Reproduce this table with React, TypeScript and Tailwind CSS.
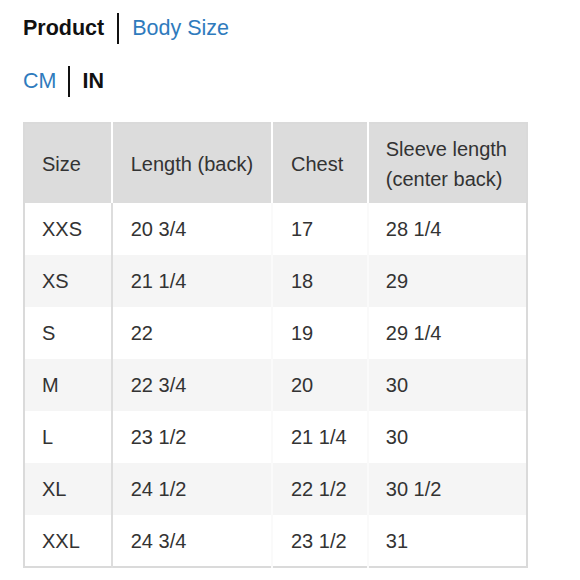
const rows = [
  ["XXS", "20 3/4", "17", "28 1/4"],
  ["XS", "21 1/4", "18", "29"],
  ["S", "22", "19", "29 1/4"],
  ["M", "22 3/4", "20", "30"],
  ["L", "23 1/2", "21 1/4", "30"],
  ["XL", "24 1/2", "22 1/2", "30 1/2"],
  ["XXL", "24 3/4", "23 1/2", "31"],
];

export default function App() {
  return (
    <div className="w-[580px] h-[580px] bg-white pl-[23px] pt-[12px] font-['Liberation_Sans',Arial,sans-serif] text-[#333]">
      {/* tabs */}
      <div className="flex items-center h-[32px] text-[21.5px]">
        <span className="font-bold text-[#111]">Product</span>
        <span className="mx-[13px] w-[2px] h-[31px] bg-[#111]" />
        <span className="text-[#2f7bbd]">Body Size</span>
      </div>
      <div className="flex items-center h-[32px] mt-[21px] text-[21.5px]">
        <span className="text-[#2f7bbd]">CM</span>
        <span className="mx-[12px] w-[2px] h-[31px] bg-[#111]" />
        <span className="font-bold text-[#111]">IN</span>
      </div>

      <table className="mt-[25px] w-[505px] border-collapse border-2 border-[#dadada] text-[20px] leading-[28px] text-left">
        <colgroup>
          <col className="w-[88px]" />
          <col className="w-[161px]" />
          <col className="w-[96px]" />
          <col className="w-[160px]" />
        </colgroup>
        <thead>
          <tr className="h-[80px] bg-[#dcdcdc]">
            <th className="font-normal pl-[17px] pr-2">Size</th>
            <th className="font-normal pl-[18px] pr-2 border-l-2 border-white">Length (back)</th>
            <th className="font-normal pl-[18px] pr-2 border-l-2 border-white">Chest</th>
            <th className="font-normal pl-[17px] pr-2 border-l-2 border-white leading-[30px]">
              Sleeve length
              <br />
              (center back)
            </th>
          </tr>
        </thead>
        <tbody>
          {rows.map((r, i) => (
            <tr key={r[0]} className={i % 2 === 1 ? "h-[52px] bg-[#f5f5f5]" : "h-[52px] bg-white"}>
              <td className="pl-[17px] border-r-2 border-[#dddddd]">{r[0]}</td>
              <td className="pl-[18px]">{r[1]}</td>
              <td className="pl-[18px] border-l-2 border-[#fafafa]">{r[2]}</td>
              <td className="pl-[17px] border-l-2 border-[#fafafa]">{r[3]}</td>
            </tr>
          ))}
        </tbody>
      </table>
    </div>
  );
}
